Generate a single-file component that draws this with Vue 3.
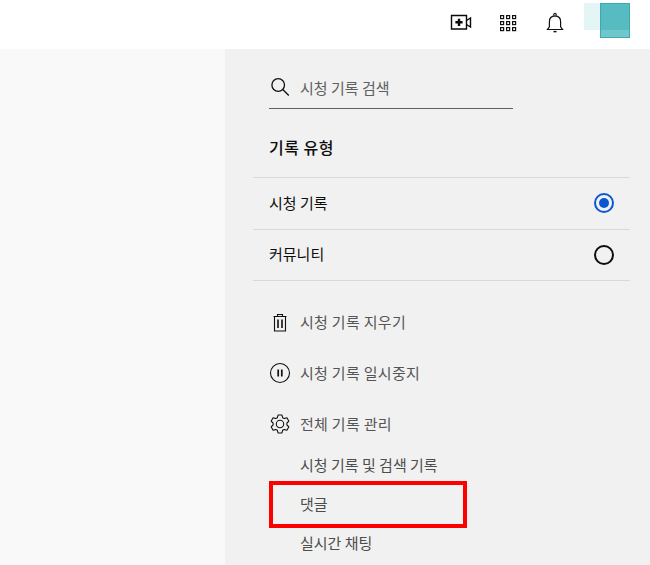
<script setup>
const types = [
  { label: '시청 기록', on: true },
  { label: '커뮤니티', on: false },
]
const subs = ['시청 기록 및 검색 기록', '댓글', '실시간 채팅']
</script>

<template>
  <div class="page">
    <header class="top">
      <svg class="i video" width="24" height="24" viewBox="0 0 24 24" fill="none" stroke="#0a0a0a" stroke-width="1.4">
        <path d="M2.500 5.500h15v13.500h-15z" />
        <path d="M17.500 10.500l4-2.500v9l-4-2.500" />
        <path d="M10 8.700v7.200M6.400 12.300h7.200" stroke-width="2.400" />
      </svg>
      <svg class="i apps" width="24" height="24" viewBox="0 0 24 24" fill="none" stroke="#111" stroke-width="1.2">
        <g>
          <rect x="4.600" y="5.600" width="3" height="3" /><rect x="10.600" y="5.600" width="3" height="3" /><rect x="16.600" y="5.600" width="3" height="3" />
          <rect x="4.600" y="11.600" width="3" height="3" /><rect x="10.600" y="11.600" width="3" height="3" /><rect x="16.600" y="11.600" width="3" height="3" />
          <rect x="4.600" y="17.600" width="3" height="3" /><rect x="10.600" y="17.600" width="3" height="3" /><rect x="16.600" y="17.600" width="3" height="3" />
        </g>
      </svg>
      <svg class="i bell" width="24" height="24" viewBox="0 0 24 24" fill="none" stroke="#111" stroke-width="1.2">
        <path d="M4.500 19.500h15l-1.900-2.600v-5.400c0-3.200-2-5.400-5.600-5.600-3.600.2-5.600 2.400-5.600 5.600v5.400z" />
        <path d="M10.700 5.500c0-3 2.600-3 2.600 0" />
        <path d="M10.500 21.600h3" stroke-width="1.500" />
      </svg>
      <div class="avatar">
        <span class="a-light"></span>
        <span class="a-dark"></span>
      </div>
    </header>

    <div class="body">
      <div class="left"></div>
      <aside class="panel">
        <div class="search">
          <svg width="24" height="24" viewBox="0 0 24 24" fill="none" stroke="#111" stroke-width="1.300">
            <circle cx="10.200" cy="10" r="6.300" />
            <path d="M14.800 14.500l6 6" />
          </svg>
          <span>시청 기록 검색</span>
        </div>

        <h3 class="title">기록 유형</h3>

        <ul class="types">
          <li v-for="t in types" :key="t.label">
            <span class="type-label">{{ t.label }}</span>
            <span class="radio" :class="{ on: t.on }"></span>
          </li>
        </ul>

        <div class="actions">
          <div class="action">
            <svg width="24" height="24" viewBox="0 0 24 24" fill="none" stroke="#111" stroke-width="1.100">
              <path d="M6.500 6.500h11v14.500h-11zM5.500 6.500h13M9.500 6.500V4.500h5v2" />
              <path d="M10 9.500v8.500M14 9.500v8.500" stroke-width="1.600" />
            </svg>
            <span>시청 기록 지우기</span>
          </div>
          <div class="action">
            <svg width="24" height="24" viewBox="0 0 24 24" fill="none" stroke="#111" stroke-width="1.100">
              <circle cx="12" cy="12" r="9.500" />
              <path d="M10.200 8.500v7M13.800 8.500v7" stroke-width="1.700" />
            </svg>
            <span>시청 기록 일시중지</span>
          </div>
          <div class="action">
            <svg width="24" height="24" viewBox="0 0 24 24" fill="none" stroke="#111" stroke-width="1.100">
              <circle cx="12" cy="12" r="3.700" />
              <path d="M10 3h4l.6 2.700 1.700.9 2.600-.9 2 3.500-2 1.800v2l2 1.800-2 3.500-2.600-.9-1.700.9L14 21h-4l-.6-2.700-1.700-.9-2.600.9-2-3.500 2-1.800v-2l-2-1.800 2-3.500 2.600.9 1.700-.9z" stroke-linejoin="round" />
            </svg>
            <span>전체 기록 관리</span>
          </div>
        </div>

        <div class="subs">
          <a v-for="s in subs" :key="s">{{ s }}</a>
          <div class="mark"></div>
        </div>
      </aside>
    </div>
  </div>
</template>

<style scoped>
.page {
  width: 650px;
  height: 565px;
  overflow: hidden;
  display: flex;
  flex-direction: column;
  background: #fff;
  font-family: "Noto Sans CJK KR", "Noto Sans", sans-serif;
  color: #111;
}
.top {
  height: 49px;
  flex: none;
  display: flex;
  align-items: center;
  box-sizing: border-box;
  padding-left: 449px;
}
.i { display: block; flex: none; margin-top: -5px; }
.video { margin-right: 23px; }
.apps { margin-right: 23px; }
.bell { margin-right: 17px; }
.avatar {
  position: relative;
  width: 46px;
  height: 38px;
  margin-top: -11px;
}
.a-light {
  position: absolute;
  left: 0;
  top: 3px;
  width: 30px;
  height: 27px;
  background: #e4f5f5;
}
.a-dark {
  position: absolute;
  left: 16px;
  top: 3px;
  width: 30px;
  height: 35px;
  background: linear-gradient(#57bcc2 0 27px, #6fc6cb 27px);
  box-shadow: inset 0 0 0 1px #3fa9b0;
}
.body {
  flex: 1;
  display: flex;
  min-height: 0;
}
.left {
  width: 225px;
  flex: none;
  background: #f9f9f9;
}
.panel {
  flex: 1;
  background: #f1f1f1;
  box-sizing: border-box;
  padding: 0 20px 0 28px;
}
.search {
  margin: 26px 0 0 16px;
  width: 244px;
  height: 34px;
  box-sizing: border-box;
  border-bottom: 1px solid #606060;
  display: flex;
  align-items: flex-start;
  gap: 8px;
  font-size: 15px;
  line-height: 26px;
  color: #606060;
}
.search svg { flex: none; margin-left: -1px; }
.title {
  margin: 25px 0 0 16px;
  font-size: 16px;
  letter-spacing: 0.5px;
  font-weight: 500;
  line-height: 26px;
  color: #0d0d0d;
}
.types {
  list-style: none;
  margin: 17px 0 0;
  padding: 0;
  border-top: 1px solid #d8d8d8;
}
.types li {
  height: 51.500px;
  box-sizing: border-box;
  border-bottom: 1px solid #d8d8d8;
  display: flex;
  align-items: center;
  justify-content: space-between;
  padding: 0 16px;
  font-size: 15px;
  color: #0d0d0d;
}
.type-label { margin-top: -2px; }
.radio {
  width: 20px;
  height: 20px;
  box-sizing: border-box;
  border: 2px solid #0d0d0d;
  border-radius: 50%;
  position: relative;
}
.radio.on { border-color: #0b57d0; }
.radio.on::after {
  content: "";
  position: absolute;
  inset: 3px;
  border-radius: 50%;
  background: #0b57d0;
}
.actions { margin: 15px 0 0 16px; }
.action {
  height: 51px;
  display: flex;
  align-items: center;
  gap: 8px;
  font-size: 15px;
  letter-spacing: 0.3px;
  color: #555;
}
.action svg { flex: none; margin-left: -1px; }
.subs {
  position: relative;
  margin: -3px 0 0 47px;
  display: flex;
  flex-direction: column;
}
.subs a {
  height: 39px;
  line-height: 38px;
  font-size: 15px;
  color: #4d4d4d;
}
.mark {
  position: absolute;
  left: -31px;
  top: 35px;
  width: 198px;
  height: 47px;
  box-sizing: border-box;
  border: 4px solid #f00;
}
</style>
